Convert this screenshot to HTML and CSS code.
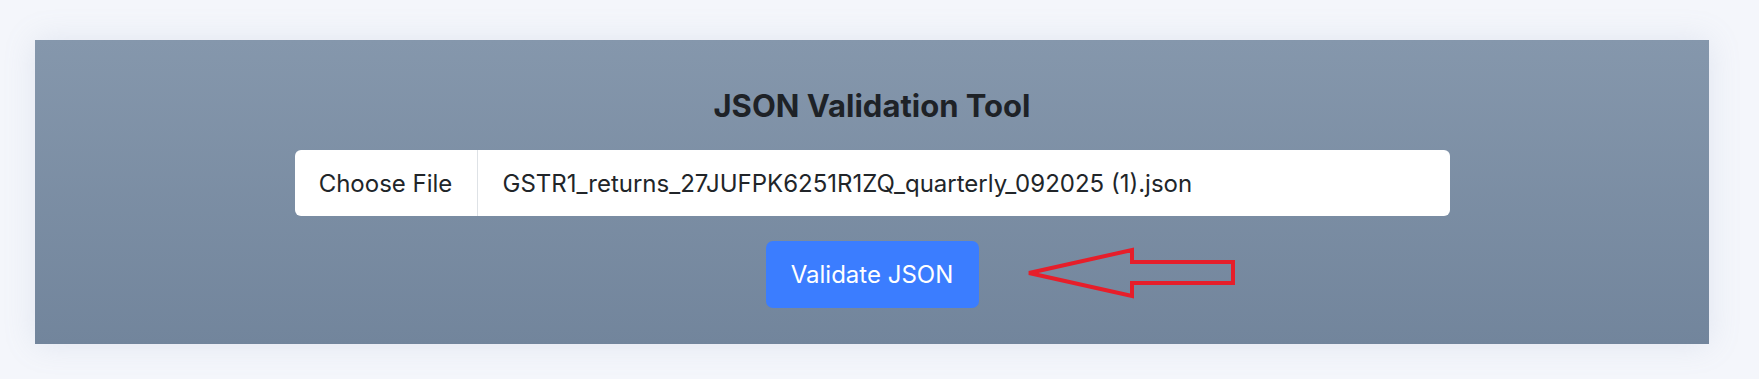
FILE: index.html
```html
<!DOCTYPE html>
<html lang="en">
<head>
<meta charset="utf-8">
<title>JSON Validation Tool</title>
<link rel="stylesheet" href="styles.css">
</head>
<body>
<main class="page">
  <section class="panel">
    <h1 class="title">JSON Validation Tool</h1>
    <div class="file-input">
      <span class="file-btn">Choose File</span>
      <span class="file-name">GSTR1_returns_27JUFPK6251R1ZQ_quarterly_092025 (1).json</span>
    </div>
    <div class="action">
      <button class="validate" type="button">Validate JSON</button>
      <svg class="arrow" width="214" height="54" viewBox="0 0 214 54" aria-hidden="true">
        <polygon points="4,27 107,4 107,16 208,16 208,37 107,37 107,50" fill="none" stroke="#e61e2a" stroke-width="4" stroke-linejoin="miter"/>
      </svg>
    </div>
  </section>
</main>
</body>
</html>
```

FILE: styles.css
```css
* { box-sizing: border-box; }
html, body { margin: 0; padding: 0; }
body {
  background: #f4f6fb;
  font-family: Inter, "Noto Sans", "Liberation Sans", sans-serif;
  width: 1759px;
  height: 379px;
  overflow: hidden;
}
.page {
  padding: 40px 50px 35px 35px;
}
.panel {
  height: 304px;
  background: linear-gradient(180deg, #8597ac 0%, #72859c 100%);
  box-shadow: 0 0 30px rgba(140, 155, 190, 0.18);
  padding-top: 48px;
  display: flex;
  flex-direction: column;
  align-items: center;
}
.title {
  margin: 0;
  font-size: 31px;
  line-height: 36px;
  font-weight: 700;
  color: #1e2227;
}
.file-input {
  margin-top: 26px;
  width: 1155px;
  height: 66px;
  background: #fff;
  border-radius: 6px;
  display: flex;
  align-items: center;
  color: #212529;
  font-size: 24px;
}
.file-btn {
  width: 183px;
  height: 100%;
  display: flex;
  align-items: center;
  justify-content: center;
  border-right: 1px solid #dee2e6;
}
.file-name {
  padding-left: 25px;
}
.action {
  position: relative;
  margin-top: 25px;
}
.validate {
  width: 213px;
  height: 67px;
  border: 0;
  border-radius: 7px;
  background: #3b7dff;
  color: #fff;
  font-family: inherit;
  font-size: 24px;
  padding: 0;
}
.arrow {
  position: absolute;
  left: calc(100% + 46px);
  top: 5px;
}
```
